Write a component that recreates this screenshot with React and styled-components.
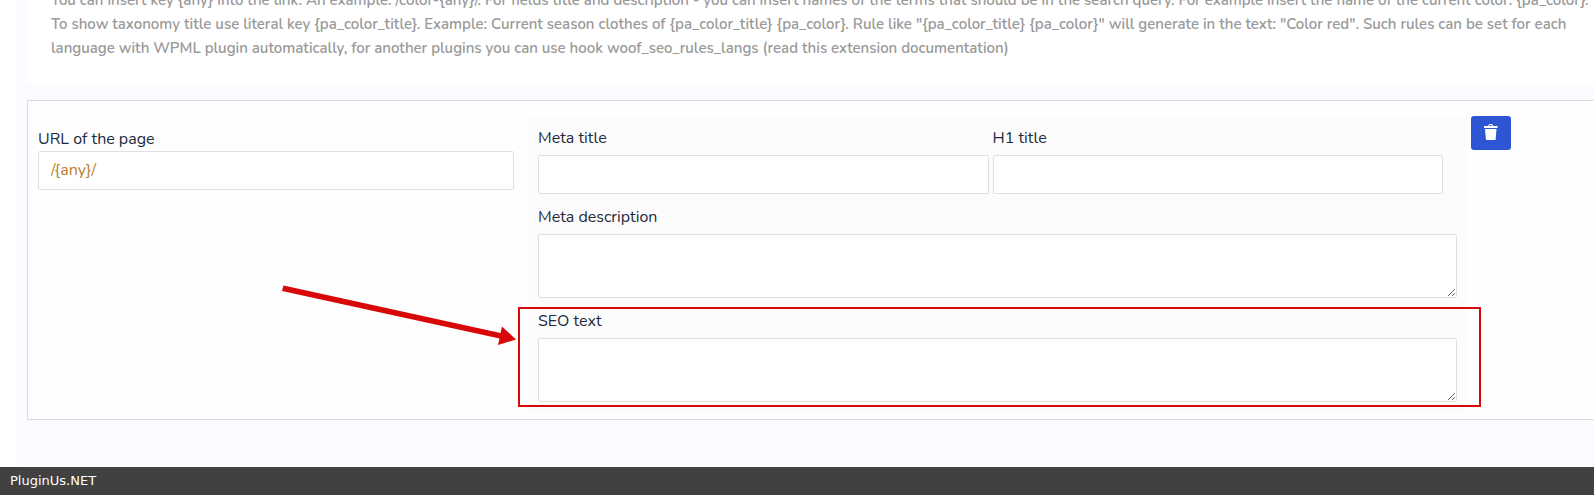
import React, { useState } from 'react'
import styled, { createGlobalStyle } from 'styled-components'

const GlobalStyle = createGlobalStyle`
*, *::before, *::after {
    box-sizing: border-box;
}
body {
    margin: 0;
    overflow: hidden;
    background: #fff;
    font-family: Nunito, Lato, sans-serif;
    font-size: 16px;
    line-height: 24px;
    color: #212a3c;
}
`;

const Page = styled.div`
display: flex;
flex-direction: column;
min-height: 100vh;
`;

const Content = styled.main`
flex: 1;
margin-left: 17px;
padding-left: 10px;
padding-bottom: 47px;
background: #fafcff;
`;

const Notice = styled.p`
margin: -12px 0 16px;
padding: 0 0 24px 24px;
background: #fff;
color: #999;
font-size: 15px;
font-weight: 600;
white-space: nowrap;
`;

const Line = styled.span`
display: block;
`;

const Rule = styled.form`
display: grid;
grid-template-columns: 500fr 939fr 127fr;
padding: 15px 0 6px;
background: #fefefe;
border: 1px solid #d9dbdf;
border-right: 0;
`;

const UrlColumn = styled.div`
padding: 11px 14px 0 10px;
`;

const MetaColumn = styled.div`
display: flex;
flex-direction: column;
gap: 11px;
padding: 10px 10px 11px;
background: #fcfcfc;
border-radius: 4px;
`;

const ActionColumn = styled.div`
padding-left: 4px;
`;

const Titles = styled.div`
display: grid;
grid-template-columns: 1fr 1fr;
gap: 4px;
padding-right: 14px;
`;

const Field = styled.div`
display: flex;
flex-direction: column;
gap: ${(props) => props.$gap || 0}px;
position: relative;
`;

const Label = styled.label`
color: #212a3c;
`;

const Input = styled.input`
width: 100%;
height: 39px;
padding: 0 12px 2px;
border: 1px solid #dee0e6;
border-radius: 2px;
background: #fff;
color: #b8802b;
font: inherit;
outline: none;
`;

const TextArea = styled.textarea`
display: block;
width: 100%;
height: 64px;
padding: 8px 12px;
border: 1px solid #dee0e6;
border-radius: 2px;
background: #fff;
color: #b8802b;
font: inherit;
outline: none;
resize: vertical;
`;

const DeleteButton = styled.button`
display: flex;
justify-content: center;
width: 40px;
height: 34px;
padding: 8px 0 0;
border: 0;
border-radius: 3px;
background: #2e55d4;
color: #fff;
cursor: pointer;
`;

const Highlight = styled.div`
position: absolute;
top: -2px;
bottom: -5px;
left: -20px;
right: -24px;
border: 2px solid #d80808;
pointer-events: none;
`;

const Arrow = styled.svg`
position: absolute;
right: 100%;
bottom: 50%;
margin: 0 4px 12px 0;
`;

const Footer = styled.footer`
height: 28px;
padding-left: 10px;
background: #414141;
color: #fff;
font-family: "DejaVu Sans", sans-serif;
font-size: 13px;
line-height: 27px;
`;

const TrashIcon = () => (
    <svg width="14" height="16" viewBox="0 0 14 16" fill="currentColor" aria-hidden="true">
        <path d="M0 2h4.2C4.500.6 5.500 0 6.700 0s2.200.6 2.500 2H13.500v2H0zM5.400 2h2.600C7.900 1.300 7.400 1 6.700 1s-1.200.3-1.300 1z" />
        <path d="M1 5h11.500l-.9 11H2z" />
    </svg>
);

const App = () => {
    const [rule, setRule] = useState({ url: '/{any}/', title: '', h1: '', description: '', text: '' });

    const bind = (name) => ({
        id: name,
        name,
        value: rule[name],
        onChange: (e) => setRule({ ...rule, [name]: e.target.value }),
    });

    return (
        <Page>
            <GlobalStyle />
            <Content>
                <Notice>
                    <Line>{'You can insert key {any} into the link. An example: /color-{any}/. For fields title and description - you can insert names of the terms that should be in the search query. For example insert the name of the current color: {pa_color}.'}</Line>
                    <Line>{'To show taxonomy title use literal key {pa_color_title}. Example: Current season clothes of {pa_color_title} {pa_color}. Rule like "{pa_color_title} {pa_color}" will generate in the text: "Color red". Such rules can be set for each'}</Line>
                    <Line>language with WPML plugin automatically, for another plugins you can use hook woof_seo_rules_langs (read this extension documentation)</Line>
                </Notice>

                <Rule onSubmit={(e) => e.preventDefault()}>
                    <UrlColumn>
                        <Field>
                            <Label htmlFor="url">URL of the page</Label>
                            <Input {...bind('url')} />
                        </Field>
                    </UrlColumn>

                    <MetaColumn>
                        <Titles>
                            <Field $gap={5}>
                                <Label htmlFor="title">Meta title</Label>
                                <Input {...bind('title')} />
                            </Field>
                            <Field $gap={5}>
                                <Label htmlFor="h1">H1 title</Label>
                                <Input {...bind('h1')} />
                            </Field>
                        </Titles>
                        <Field $gap={5}>
                            <Label htmlFor="description">Meta description</Label>
                            <TextArea {...bind('description')} />
                        </Field>
                        <Field $gap={5}>
                            <Label htmlFor="text">SEO text</Label>
                            <TextArea {...bind('text')} />
                            <Highlight>
                                <Arrow width="236" height="64" viewBox="0 0 236 64" fill="#d80808">
                                    <path d="M3.500 4.500L220.500 52l1.500-6.500L236 58.500l-18 5.500 1.500-6.500L2 10z" />
                                </Arrow>
                            </Highlight>
                        </Field>
                    </MetaColumn>

                    <ActionColumn>
                        <DeleteButton type="button" aria-label="Delete rule">
                            <TrashIcon />
                        </DeleteButton>
                    </ActionColumn>
                </Rule>
            </Content>
            <Footer>PluginUs.NET</Footer>
        </Page>
    );
};

export default App;
